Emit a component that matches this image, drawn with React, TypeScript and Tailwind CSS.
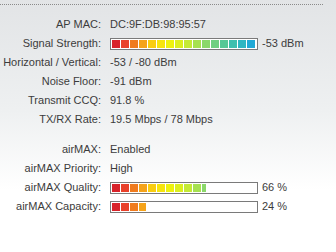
import React from "react";

const COLORS = [
  "#d8232a", "#e9412a", "#f07b1e", "#f5a31a", "#f9cd10", "#f7e50d", "#eef20e", "#dcef1f",
  "#c4ea35", "#a6e150", "#8bd86a", "#6fcf80", "#55c896", "#3ebfae", "#2eb6c2", "#21a9d6",
];

function Bar({ pct }: { pct: number }) {
  const w = Math.round((143 * pct) / 100);
  return (
    <div className="h-[12px] w-[148px] border border-[#7a7a7a] bg-white p-[1px] shrink-0">
      <div className="h-full overflow-hidden" style={{ width: w }}>
        <div className="flex h-full w-[143px] gap-[1px]">
          {COLORS.map((c, i) => (
            <div key={i} className="h-full w-[8px] shrink-0" style={{ background: c }} />
          ))}
        </div>
      </div>
    </div>
  );
}

function Row({ label, children }: { label: string; children: React.ReactNode }) {
  return (
    <div className="flex h-[19px] items-center">
      <div className="w-[101px] shrink-0 text-right">{label}</div>
      <div className="ml-[9px] flex items-center">{children}</div>
    </div>
  );
}

export default function App() {
  return (
    <div
      className="h-[252px] w-[336px] overflow-hidden bg-[linear-gradient(to_bottom,#e2e4e6_0px,#eef0f1_110px,#ffffff_190px)] pt-[4px] text-[11px] leading-[19px] text-[#3c3c3c]"
      style={{ fontFamily: '"Liberation Sans", Arial, sans-serif' }}
    >
      <div className="w-[323px] border-t border-dotted border-[#8a8a8a]" />
      <div className="mt-[10px] flex flex-col">
        <Row label="AP MAC:">DC:9F:DB:98:95:57</Row>
        <Row label="Signal Strength:">
          <Bar pct={100} />
          <span className="ml-[4px]">-53 dBm</span>
        </Row>
        <Row label="Horizontal / Vertical:">-53 / -80 dBm</Row>
        <Row label="Noise Floor:">-91 dBm</Row>
        <Row label="Transmit CCQ:">91.8 %</Row>
        <Row label="TX/RX Rate:">19.5 Mbps / 78 Mbps</Row>
      </div>
      <div className="mt-[11px] flex flex-col">
        <Row label="airMAX:">Enabled</Row>
        <Row label="airMAX Priority:">High</Row>
        <Row label="airMAX Quality:">
          <Bar pct={66} />
          <span className="ml-[4px]">66 %</span>
        </Row>
        <Row label="airMAX Capacity:">
          <Bar pct={24} />
          <span className="ml-[4px]">24 %</span>
        </Row>
      </div>
    </div>
  );
}
